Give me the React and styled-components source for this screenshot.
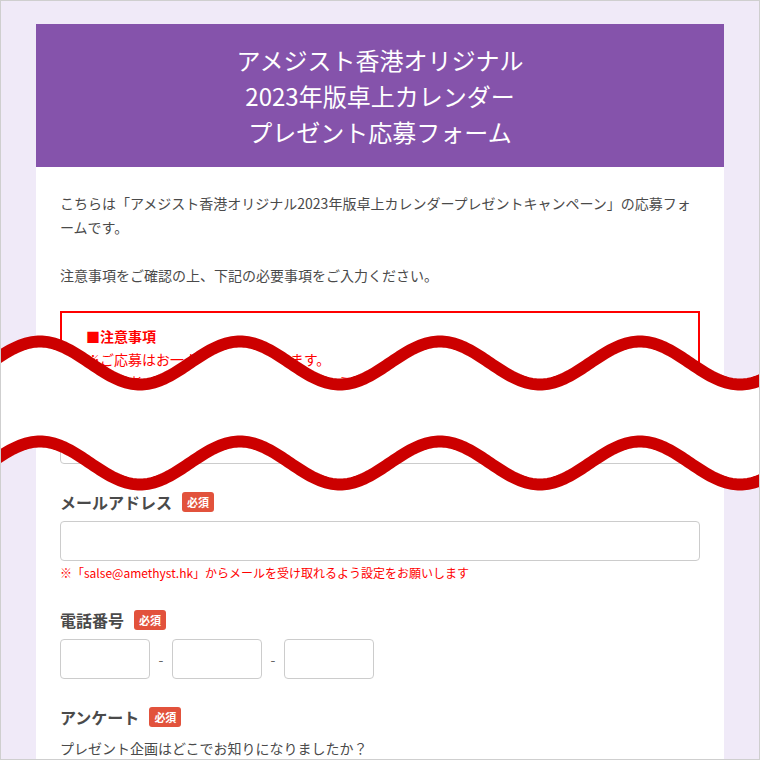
import React from "react";
import styled, { createGlobalStyle } from "styled-components";

const GlobalStyle = createGlobalStyle`
  html, body {
    margin: 0;
    padding: 0;
    overflow: hidden;
    background: #f0eaf8;
  }
  body {
    font-family: "Noto Sans CJK JP", "Noto Sans", sans-serif;
    color: #4a4a4a;
  }
  * { box-sizing: border-box; }
`;

const Page = styled.div`
  position: relative;
  width: 760px;
  min-height: 760px;
  padding-top: 24px;
`;

const Card = styled.main`
  width: 688px;
  margin: 0 auto;
  background: #fff;
`;

const Header = styled.header`
  background: #8553ab;
  color: #fff;
  text-align: center;
  font-size: 24px;
  line-height: 36px;
  font-weight: 400;
  padding: 18px 24px 17px;
`;

const Body = styled.div`
  padding: 24px 24px 80px;
`;

const Intro = styled.p`
  margin: 0;
  font-size: 14px;
  line-height: 24px;
  color: #4a4a4a;
`;

const Notice = styled.div`
  margin-top: 24px;
  border: 2px solid #ff0000;
  padding: 12px 24px;
  color: #ff0000;
  font-size: 14px;
  line-height: 23px;
`;

const NoticeTitle = styled.div`
  font-weight: 700;
`;

const Input = styled.div`
  height: 40px;
  width: ${(p) => (p.$w ? `${p.$w}px` : "100%")};
  border: 1px solid #cccccc;
  border-radius: 4px;
  background: #fff;
`;

const HiddenInput = styled(Input)`
  margin-top: 16px;
`;

const Field = styled.section`
  margin-top: 26px;
`;

const Label = styled.div`
  display: flex;
  align-items: center;
  gap: 10px;
  font-size: 16px;
  line-height: 24px;
  font-weight: 700;
  color: #4a4a4a;
  margin-bottom: 7px;
`;

const Badge = styled.span`
  display: inline-flex;
  align-items: center;
  justify-content: center;
  height: 20px;
  padding: 0 5px;
  border-radius: 3px;
  background: #e2523c;
  color: #fff;
  font-size: 11px;
  font-weight: 700;
  line-height: 1;
`;

const Note = styled.div`
  margin-top: 3px;
  font-size: 12px;
  line-height: 18px;
  color: #ff0000;
`;

const PhoneRow = styled.div`
  display: flex;
  align-items: center;
  margin-top: 2px;
`;

const Dash = styled.span`
  width: 22px;
  text-align: center;
  font-size: 14px;
  color: #666;
`;

const Question = styled.div`
  font-size: 14px;
  line-height: 24px;
  color: #4a4a4a;
`;

const WaveLayer = styled.svg`
  position: absolute;
  left: 0;
  top: 310px;
  width: 760px;
  height: 200px;
  z-index: 5;
  pointer-events: none;
`;

const Frame = styled.div`
  position: fixed;
  inset: 0;
  border: 1px solid #cfcfcf;
  pointer-events: none;
  z-index: 10;
`;

const TOP = 310;
function wavePoints(offset) {
  const pts = [];
  for (let x = -12; x <= 772; x += 2) {
    const y = 363 + offset - 21.5 * Math.cos((2 * Math.PI * (x - 40)) / 200) - TOP;
    pts.push([x, y]);
  }
  return pts;
}

function Waves() {
  const a = wavePoints(0);
  const b = wavePoints(100);
  const line = (pts) => pts.map((p, i) => `${i ? "L" : "M"}${p[0]} ${p[1].toFixed(2)}`).join(" ");
  const fill =
    line(a) +
    " " +
    b
      .slice()
      .reverse()
      .map((p) => `L${p[0]} ${p[1].toFixed(2)}`)
      .join(" ") +
    " Z";
  return (
    <WaveLayer viewBox="0 0 760 200">
      <path d={fill} fill="#ffffff" />
      <path d={line(a)} fill="none" stroke="#cc0000" strokeWidth="12" />
      <path d={line(b)} fill="none" stroke="#cc0000" strokeWidth="12" />
    </WaveLayer>
  );
}

export default function App() {
  return (
    <>
      <GlobalStyle />
      <Page>
        <Card>
          <Header>
            アメジスト香港オリジナル
            <br />
            2023年版卓上カレンダー
            <br />
            プレゼント応募フォーム
          </Header>
          <Body>
            <Intro>
              こちらは「アメジスト香港オリジナル2023年版卓上カレンダープレゼントキャンペーン」の応募フォームです。
              <br />
              <br />
              注意事項をご確認の上、下記の必要事項をご入力ください。
            </Intro>
            <Notice>
              <NoticeTitle>■注意事項</NoticeTitle>
              <div>※ご応募はお一人様1回限りとします。</div>
              <div>※当選者の発表は賞品の発送をもってかえさせていただきます。</div>
            </Notice>
            <HiddenInput />
            <Field>
              <Label>
                メールアドレス<Badge>必須</Badge>
              </Label>
              <Input />
              <Note>※「salse@amethyst.hk」からメールを受け取れるよう設定をお願いします</Note>
            </Field>
            <Field>
              <Label>
                電話番号<Badge>必須</Badge>
              </Label>
              <PhoneRow>
                <Input $w={90} />
                <Dash>-</Dash>
                <Input $w={90} />
                <Dash>-</Dash>
                <Input $w={90} />
              </PhoneRow>
            </Field>
            <Field>
              <Label>
                アンケート<Badge>必須</Badge>
              </Label>
              <Question>プレゼント企画はどこでお知りになりましたか？</Question>
            </Field>
          </Body>
        </Card>
        <Waves />
      </Page>
      <Frame />
    </>
  );
}
